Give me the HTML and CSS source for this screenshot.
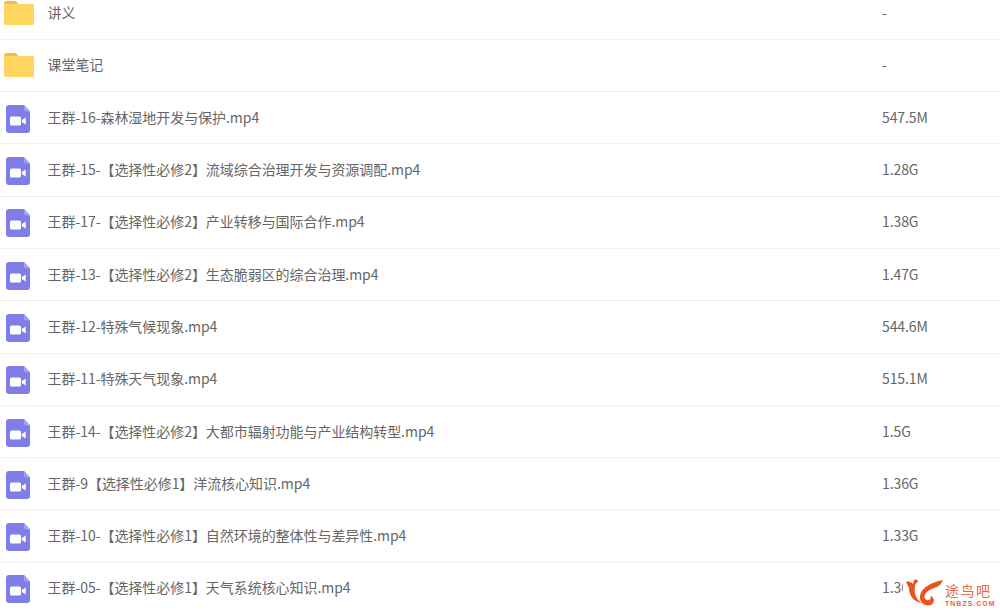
FILE: index.html
```html
<!DOCTYPE html>
<html lang="zh-CN">
<head>
    <meta charset="UTF-8">
    <meta name="viewport" content="width=device-width, initial-scale=1.0">
    <title>文件列表</title>
    <link rel="stylesheet" href="styles.css">
</head>
<body>
    <svg class="sprites" width="0" height="0">
        <symbol id="folder" viewBox="0 0 30 24">
            <path d="M0 2.5C0 1 .8 0 2.2 0h8.3c1.2 0 2 .5 2.6 1.4L14.5 3H2L0 4z" fill="#f2bd48"/>
            <rect x="0" y="3" width="30" height="21" rx="1.8" fill="#ffd45f"/>
        </symbol>
        <symbol id="video" viewBox="0 0 24 28">
            <path d="M3 0h15l6 6.5V25a3 3 0 0 1-3 3H3a3 3 0 0 1-3-3V3a3 3 0 0 1 3-3z" fill="#7f7de8"/>
            <path d="M18 0l6 6.5h-4a2 2 0 0 1-2-2z" fill="#a3a1f0"/>
            <rect x="4" y="11.5" width="11" height="9" rx="1.6" fill="#fff"/>
            <path d="M15.8 15l3.9-2.6v7.2l-3.9-2.6z" fill="#fff"/>
        </symbol>
    </svg>

    <ul class="file-list">
        <li class="file-row">
            <svg class="icon-folder"><use href="#folder"/></svg>
            <span class="file-name">讲义</span>
            <span class="file-size">-</span>
        </li>
        <li class="file-row">
            <svg class="icon-folder"><use href="#folder"/></svg>
            <span class="file-name">课堂笔记</span>
            <span class="file-size">-</span>
        </li>
        <li class="file-row">
            <svg class="icon-video"><use href="#video"/></svg>
            <span class="file-name">王群-16-森林湿地开发与保护.mp4</span>
            <span class="file-size">547.5M</span>
        </li>
        <li class="file-row">
            <svg class="icon-video"><use href="#video"/></svg>
            <span class="file-name">王群-15-【选择性必修2】流域综合治理开发与资源调配.mp4</span>
            <span class="file-size">1.28G</span>
        </li>
        <li class="file-row">
            <svg class="icon-video"><use href="#video"/></svg>
            <span class="file-name">王群-17-【选择性必修2】产业转移与国际合作.mp4</span>
            <span class="file-size">1.38G</span>
        </li>
        <li class="file-row">
            <svg class="icon-video"><use href="#video"/></svg>
            <span class="file-name">王群-13-【选择性必修2】生态脆弱区的综合治理.mp4</span>
            <span class="file-size">1.47G</span>
        </li>
        <li class="file-row">
            <svg class="icon-video"><use href="#video"/></svg>
            <span class="file-name">王群-12-特殊气候现象.mp4</span>
            <span class="file-size">544.6M</span>
        </li>
        <li class="file-row">
            <svg class="icon-video"><use href="#video"/></svg>
            <span class="file-name">王群-11-特殊天气现象.mp4</span>
            <span class="file-size">515.1M</span>
        </li>
        <li class="file-row">
            <svg class="icon-video"><use href="#video"/></svg>
            <span class="file-name">王群-14-【选择性必修2】大都市辐射功能与产业结构转型.mp4</span>
            <span class="file-size">1.5G</span>
        </li>
        <li class="file-row">
            <svg class="icon-video"><use href="#video"/></svg>
            <span class="file-name">王群-9【选择性必修1】洋流核心知识.mp4</span>
            <span class="file-size">1.36G</span>
        </li>
        <li class="file-row">
            <svg class="icon-video"><use href="#video"/></svg>
            <span class="file-name">王群-10-【选择性必修1】自然环境的整体性与差异性.mp4</span>
            <span class="file-size">1.33G</span>
        </li>
        <li class="file-row">
            <svg class="icon-video"><use href="#video"/></svg>
            <span class="file-name">王群-05-【选择性必修1】天气系统核心知识.mp4</span>
            <span class="file-size">1.36G</span>
        </li>
    </ul>

    <!-- watermark sits over the last row -->
    <div class="watermark">
        <svg class="watermark-logo" viewBox="0 0 40 30">
            <path d="M1 4c3-1 5 0 7 2l1-4c2-1 4 0 4 2-2 1-3 2-3 4-1 6 0 13 7 17-8-1-13-7-13-15C3 8 2 6 1 4z" fill="#e8541f"/>
            <path d="M38 2c-3 8-9 7-15 11-4 3-5 8-1 9 3 1 5-2 3-4 5 1 5 7 1 9-6 2-12-3-11-9 1-9 13-14 23-16z" fill="#e8541f"/>
        </svg>
        <div class="watermark-text">
            <span class="watermark-cn">途鸟吧</span>
            <span class="watermark-en">TNBZS.COM</span>
        </div>
    </div>
</body>
</html>
```

FILE: styles.css
```css
/* General */
html, body {
    height: 100%;
}

body {
    margin: 0;
    background: #fff;
    color: #666;
    font-family: "Noto Sans CJK SC", "Liberation Sans", sans-serif;
    font-size: 14px;
    overflow: hidden;
    position: relative;
}

.sprites {
    display: block;
}

/* File rows */
.file-list {
    list-style: none;
    margin: -12.5px 0 0;
    padding: 0;
}

.file-row {
    display: flex;
    align-items: center;
    height: 52.3px;
    box-sizing: border-box;
    border-bottom: 1px solid #f2f2f2;
}

.icon-folder {
    width: 30px;
    height: 24px;
    margin: 0 13.5px 0 4px;
    flex: none;
}

.icon-video {
    width: 24px;
    height: 28px;
    margin: 2px 17.5px 0 6px;
    flex: none;
}

.file-name {
    flex: 1;
    margin-bottom: 2px;
    letter-spacing: -.05px;
    white-space: nowrap;
}

.file-size {
    width: 118px;
    flex: none;
    margin-bottom: 2px;
    letter-spacing: -.1px;
}

/* Watermark */
.watermark {
    position: absolute;
    right: 0;
    bottom: 0;
    display: flex;
    align-items: center;
    width: 97px;
    height: 36px;
    padding-left: 2px;
    box-sizing: border-box;
    background: #fff;
}

.watermark-logo {
    width: 40px;
    height: 30px;
    flex: none;
}

.watermark-text {
    display: flex;
    flex-direction: column;
    color: #e8683f;
    line-height: 1;
    margin-top: 3px;
}

.watermark-cn {
    font-size: 14px;
    letter-spacing: 1.5px;
    white-space: nowrap;
}

.watermark-en {
    font-family: "Liberation Sans", sans-serif;
    font-size: 7px;
    font-weight: bold;
    letter-spacing: 1px;
    margin-top: 3px;
    white-space: nowrap;
}
```
